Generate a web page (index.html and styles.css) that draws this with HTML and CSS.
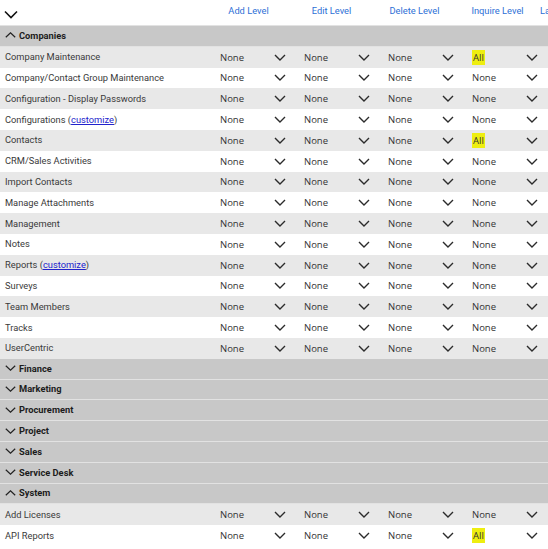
FILE: index.html
```html
<!DOCTYPE html>
<html lang="en">
<head>
  <meta charset="UTF-8">
  <title>Security Roles</title>
  <link rel="stylesheet" href="styles.css">
</head>
<body>
<div class="grid-head">
  <div class="collapse-all">
    <svg width="14" height="9" viewBox="0 0 14 9"><polyline points="1,1.5 7,7.5 13,1.5" fill="none" stroke="#111" stroke-width="1.6"/></svg>
  </div>
  <div class="col-title">Add Level</div>
  <div class="col-title">Edit Level</div>
  <div class="col-title">Delete Level</div>
  <div class="col-title">Inquire Level</div>
  <div class="col-title last">La</div>
</div>

<div class="grid-body" id="gridBody"></div>

<script>
  const groups = [
    { name: 'Companies', open: true, rows: [
      ['Company Maintenance', 'All'],
      ['Company/Contact Group Maintenance'],
      ['Configuration - Display Passwords'],
      ['Configurations', null, true],
      ['Contacts', 'All'],
      ['CRM/Sales Activities'],
      ['Import Contacts'],
      ['Manage Attachments'],
      ['Management'],
      ['Notes'],
      ['Reports', null, true],
      ['Surveys'],
      ['Team Members'],
      ['Tracks'],
      ['UserCentric']
    ]},
    { name: 'Finance', open: false, rows: [] },
    { name: 'Marketing', open: false, rows: [] },
    { name: 'Procurement', open: false, rows: [] },
    { name: 'Project', open: false, rows: [] },
    { name: 'Sales', open: false, rows: [] },
    { name: 'Service Desk', open: false, rows: [] },
    { name: 'System', open: true, rows: [
      ['Add Licenses'],
      ['API Reports', 'All']
    ]}
  ];

  const chevron = '<svg width="12" height="7" viewBox="0 0 12 7"><polyline points="1,1 6,6 11,1" fill="none" stroke="#2b2b2b" stroke-width="1.4"/></svg>';
  const down = '<svg width="11" height="6" viewBox="0 0 11 6"><polyline points="0.8,0.8 5.5,5.2 10.2,0.8" fill="none" stroke="#222" stroke-width="1.2"/></svg>';
  const up = '<svg width="11" height="6" viewBox="0 0 11 6"><polyline points="0.8,5.2 5.5,0.8 10.2,5.2" fill="none" stroke="#222" stroke-width="1.2"/></svg>';

  function levelCell(value) {
    const text = value === 'All' ? '<span class="mark">All</span>' : 'None';
    return `<div class="level">${text}${chevron}</div>`;
  }

  const body = document.getElementById('gridBody');
  let html = '';
  groups.forEach(group => {
    html += `<div class="group-row">${group.open ? up : down}<span>${group.name}</span></div>`;
    group.rows.forEach(([name, inquire, custom], i) => {
      const label = custom ? `${name} (<a href="#">customize</a>)` : name;
      html += `<div class="row ${i % 2 === 0 ? 'odd' : ''}">
        <div class="label">${label}</div>
        ${levelCell()}${levelCell()}${levelCell()}${levelCell(inquire)}
      </div>`;
    });
  });
  body.innerHTML = html;
</script>
</body>
</html>
```

FILE: styles.css
```css
* {
    margin: 0;
    padding: 0;
    box-sizing: border-box;
}

body {
    background-color: #fff;
    color: #333;
    font-family: Roboto, 'Liberation Sans', sans-serif;
    font-size: 9.3px;
    width: 548px;
    overflow: hidden;
}

.grid-head {
    display: grid;
    grid-template-columns: 207px repeat(4, 83px) 1fr;
    height: 26px;
    border-bottom: 1px solid #e2e2e2;
    align-items: center;
}

.collapse-all {
    padding: 3px 0 0 4px;
    display: flex;
}

.col-title {
    color: #2d6fd6;
    text-align: center;
    padding-bottom: 5px;
    white-space: nowrap;
}

.col-title.last {
    text-align: left;
    padding-left: 1px;
}

.group-row {
    height: 20.8px;
    background-color: #c8c8c8;
    border-bottom: 1px solid #e2e2e2;
    display: flex;
    align-items: center;
    gap: 3px;
    padding: 0 0 1px 5px;
    font-weight: 700;
    color: #1c1c1c;
}

.row {
    height: 20.8px;
    display: grid;
    grid-template-columns: 215px repeat(4, 84px);
    align-items: center;
    background-color: #fff;
    padding-bottom: 1px;
}

.row.odd {
    background-color: #e8e8e8;
}

.label {
    padding-left: 5px;
    white-space: nowrap;
    color: #3a3a3a;
}

.label a {
    color: #2222cc;
    text-decoration: underline;
}

.level {
    display: flex;
    justify-content: space-between;
    align-items: center;
    padding: 1px 13px 0 5px;
    font-family: 'Open Sans', 'Noto Sans', sans-serif;
    font-size: 9.5px;
    color: #333;
}

.mark {
    background-color: #eeee10;
    padding: 1px 1px;
}
```
